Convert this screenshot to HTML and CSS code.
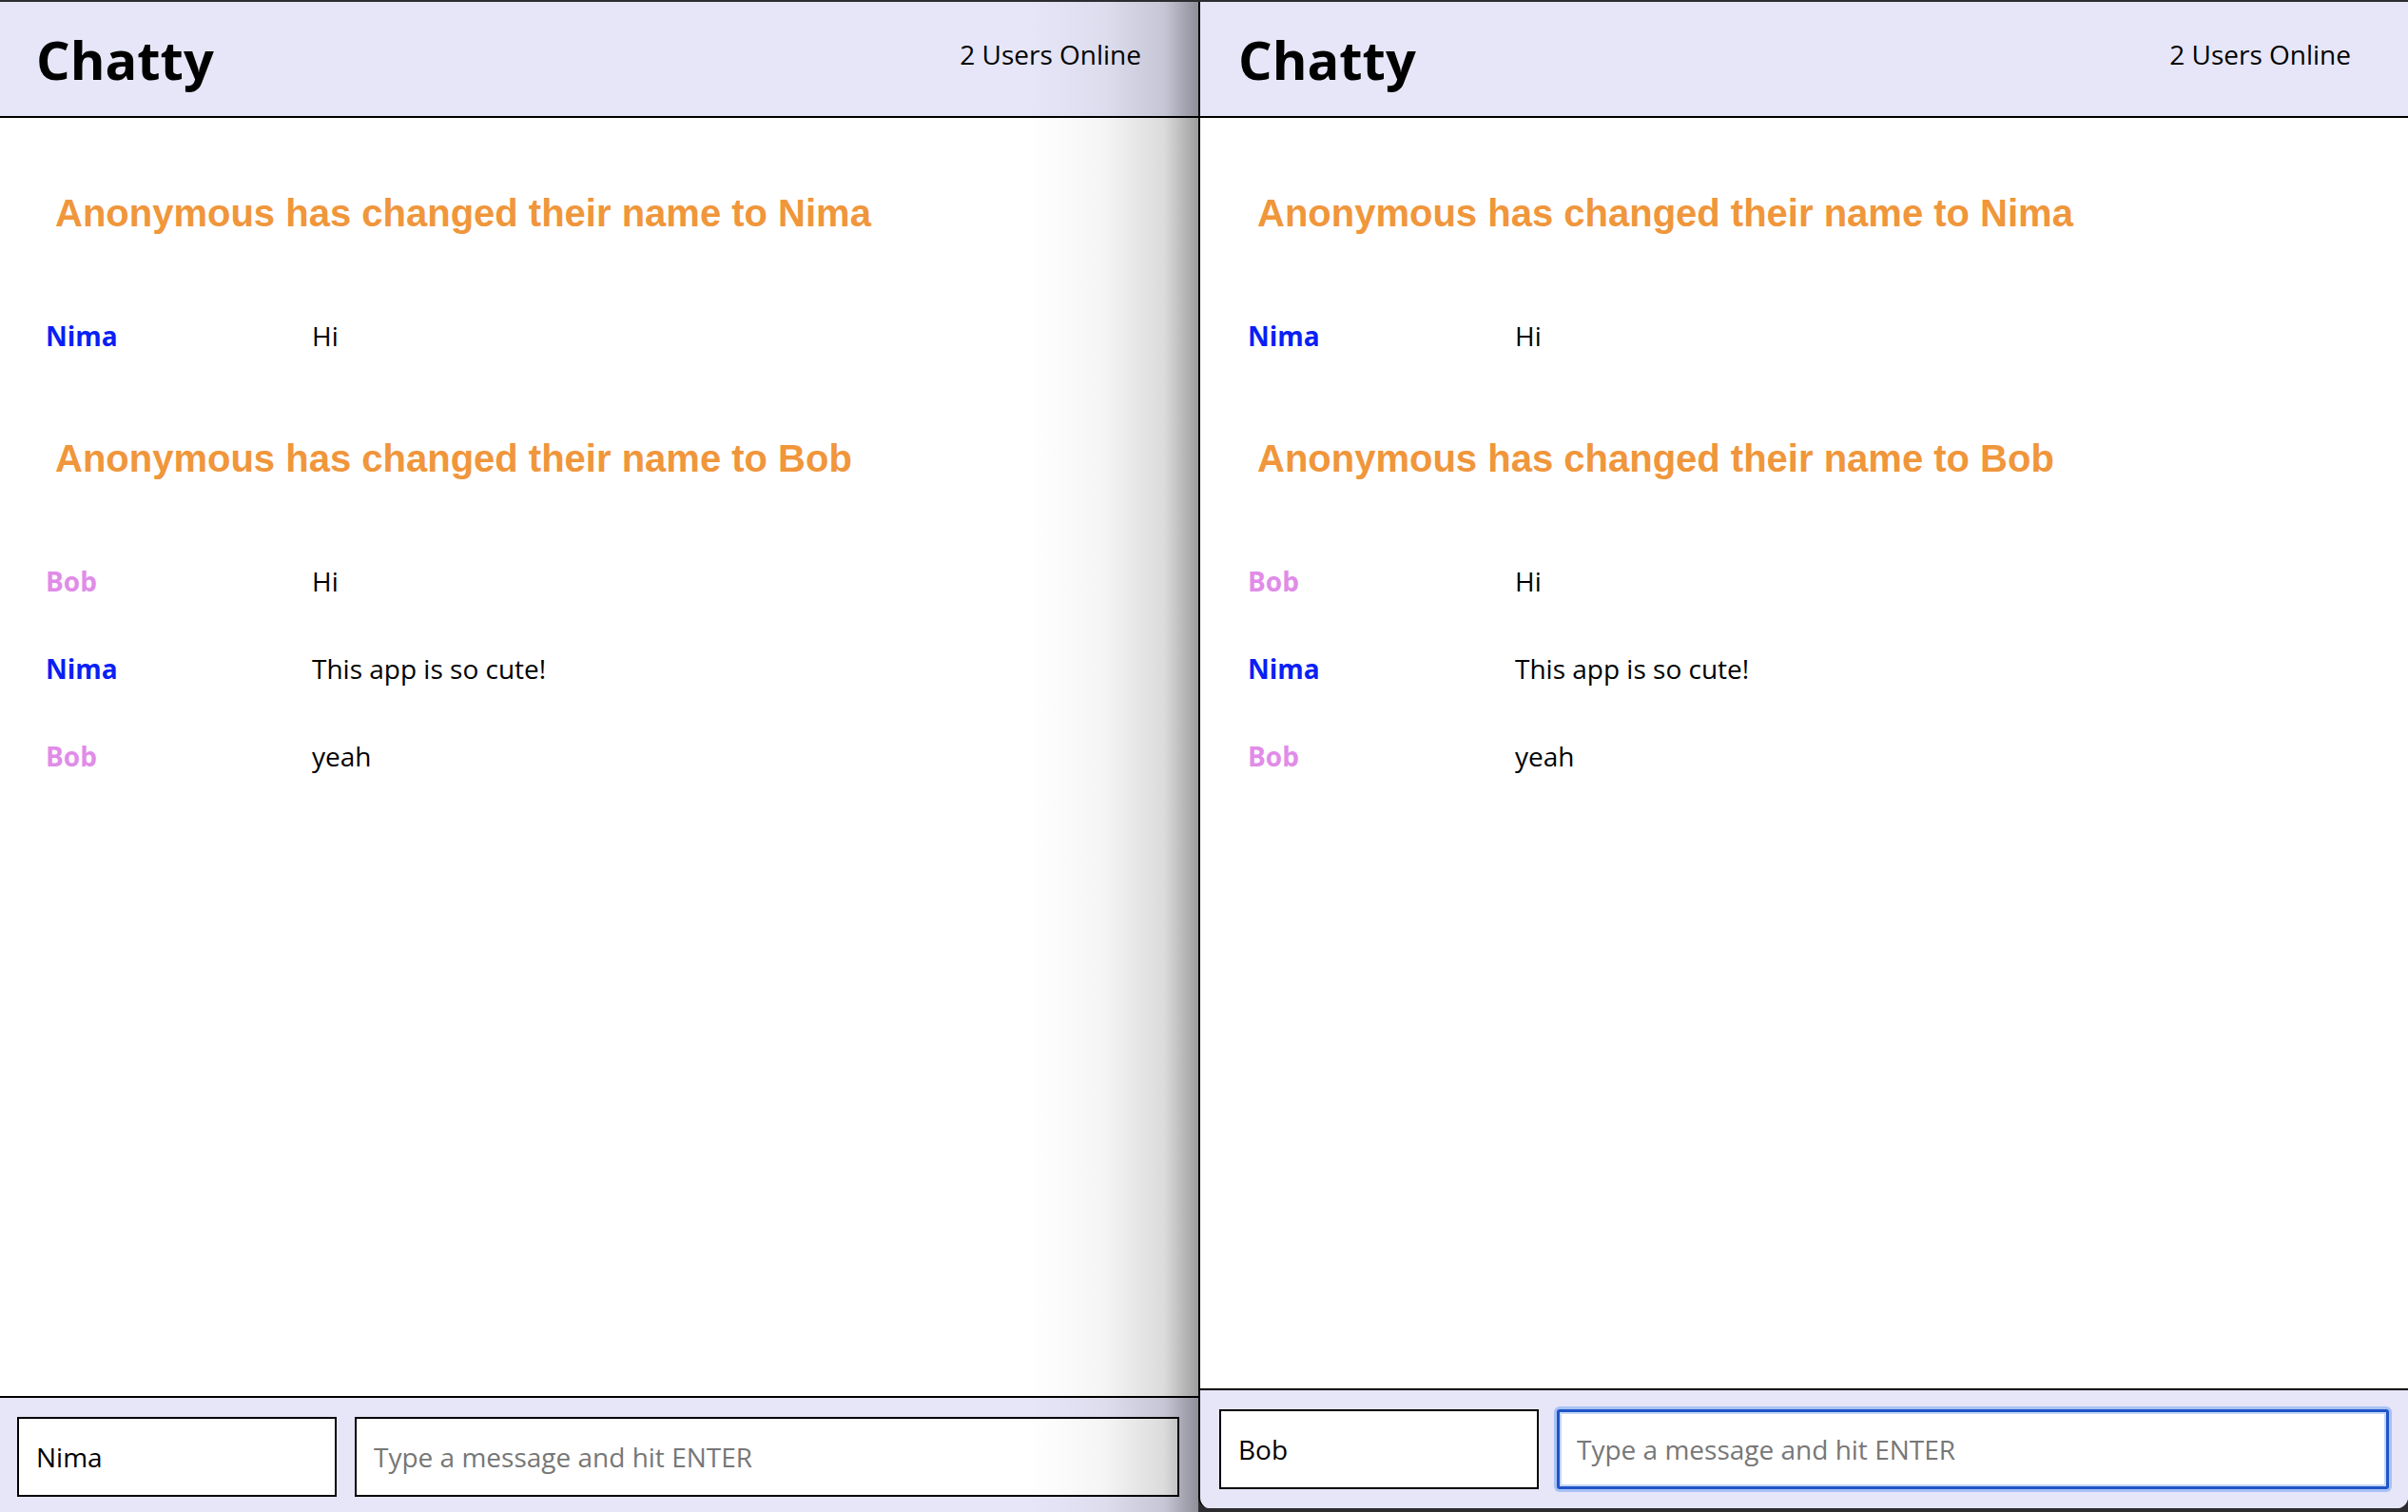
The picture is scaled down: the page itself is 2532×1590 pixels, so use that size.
FILE: index.html
```html
<!DOCTYPE html>
<html>
<head>
<meta charset="utf-8">
<title>Chatty</title>
<link rel="stylesheet" href="styles.css">
</head>
<body>
<div class="desktop">
  <section class="window window-left">
    <header class="navbar">
      <span class="brand">Chatty</span>
      <span class="online">2 Users Online</span>
    </header>
    <main class="messages">
      <div class="notification">Anonymous has changed their name to Nima</div>
      <div class="message"><span class="username nima">Nima</span><span class="content">Hi</span></div>
      <div class="notification">Anonymous has changed their name to Bob</div>
      <div class="message"><span class="username bob">Bob</span><span class="content">Hi</span></div>
      <div class="message"><span class="username nima">Nima</span><span class="content">This app is so cute!</span></div>
      <div class="message"><span class="username bob">Bob</span><span class="content">yeah</span></div>
    </main>
    <footer class="chatbar">
      <input class="chatbar-username" value="Nima">
      <input class="chatbar-message" placeholder="Type a message and hit ENTER">
    </footer>
    <div class="window-shadow"></div>
  </section>
  <section class="window window-right">
    <header class="navbar">
      <span class="brand">Chatty</span>
      <span class="online">2 Users Online</span>
    </header>
    <main class="messages">
      <div class="notification">Anonymous has changed their name to Nima</div>
      <div class="message"><span class="username nima">Nima</span><span class="content">Hi</span></div>
      <div class="notification">Anonymous has changed their name to Bob</div>
      <div class="message"><span class="username bob">Bob</span><span class="content">Hi</span></div>
      <div class="message"><span class="username nima">Nima</span><span class="content">This app is so cute!</span></div>
      <div class="message"><span class="username bob">Bob</span><span class="content">yeah</span></div>
    </main>
    <footer class="chatbar">
      <input class="chatbar-username" value="Bob">
      <input class="chatbar-message focused" placeholder="Type a message and hit ENTER">
    </footer>
  </section>
</div>
</body>
</html>
```

FILE: styles.css
```css
html, body {
  margin: 0;
  padding: 0;
}
body {
  background: #1d1d24;
  font-family: "Open Sans", "Liberation Sans", sans-serif;
  width: 2532px;
  height: 1590px;
  overflow: hidden;
}
.desktop {
  display: flex;
  align-items: flex-start;
  height: 1590px;
  padding-top: 2px;
  box-sizing: border-box;
  background: #2c2c30;
  overflow: hidden;
}
.window {
  display: flex;
  flex-direction: column;
  background: #fff;
  position: relative;
  overflow: hidden;
  flex: none;
  box-sizing: border-box;
}
.window-left {
  width: 1262px;
  height: 1592px;
  margin-left: -2px;
}
.window-right {
  width: 1272px;
  height: 1584px;
  border-left: 2px solid #000;
  border-radius: 0 0 12px 12px;
}
.navbar {
  flex: none;
  height: 122px;
  box-sizing: border-box;
  border-bottom: 2px solid #000;
  background: #e6e6f8;
  display: flex;
  align-items: center;
  justify-content: space-between;
  padding: 0 60px 0 40px;
}
.brand {
  font-size: 56px;
  font-weight: 700;
  color: #000;
  line-height: 1;
}
.online {
  font-size: 28px;
  color: #000;
  line-height: 1;
  margin-bottom: 10px;
}
.messages {
  flex: 1;
  padding-top: 17px;
  min-height: 0;
}
.notification {
  height: 166px;
  display: flex;
  align-items: center;
  padding-left: 60px;
  font-family: "Liberation Sans", Arial, sans-serif;
  font-weight: 700;
  font-size: 40px;
  color: #f0963b;
}
.message {
  height: 92px;
  display: flex;
  align-items: center;
  padding-left: 50px;
  font-size: 28px;
}
.username {
  width: 280px;
  flex: none;
  font-weight: 700;
}
.window-right .username {
  width: 281px;
}
.username.nima { color: #0a1ff5; }
.username.bob { color: #e08ce8; }
.content { color: #000; }
.chatbar {
  flex: none;
  height: 126px;
  box-sizing: border-box;
  border-top: 2px solid #000;
  background: #e6e6f8;
  padding: 20px;
  display: flex;
  gap: 19px;
}
.chatbar input {
  height: 84px;
  box-sizing: border-box;
  border: 2px solid #000;
  border-radius: 0;
  background: #fff;
  font-family: "Open Sans", sans-serif;
  font-size: 28px;
  color: #000;
  padding: 0 18px;
  outline: none;
  margin: 0;
}
.chatbar input::placeholder {
  color: #777;
}
.chatbar-username {
  width: 336px;
  flex: none;
}
.chatbar-message {
  flex: 1;
  min-width: 0;
}
.chatbar-message.focused {
  border: 3px solid #1f55c8;
  border-radius: 3px;
  box-shadow: 0 0 0 3px #a9c1f4, inset 0 0 0 2px #c6d6f8;
}
.window-shadow {
  position: absolute;
  top: 0;
  right: 0;
  bottom: 0;
  width: 180px;
  pointer-events: none;
  background: linear-gradient(to right, rgba(0,0,0,0) 0%, rgba(0,0,0,0.04) 45%, rgba(0,0,0,0.14) 80%, rgba(0,0,0,0.38) 100%);
}
```
